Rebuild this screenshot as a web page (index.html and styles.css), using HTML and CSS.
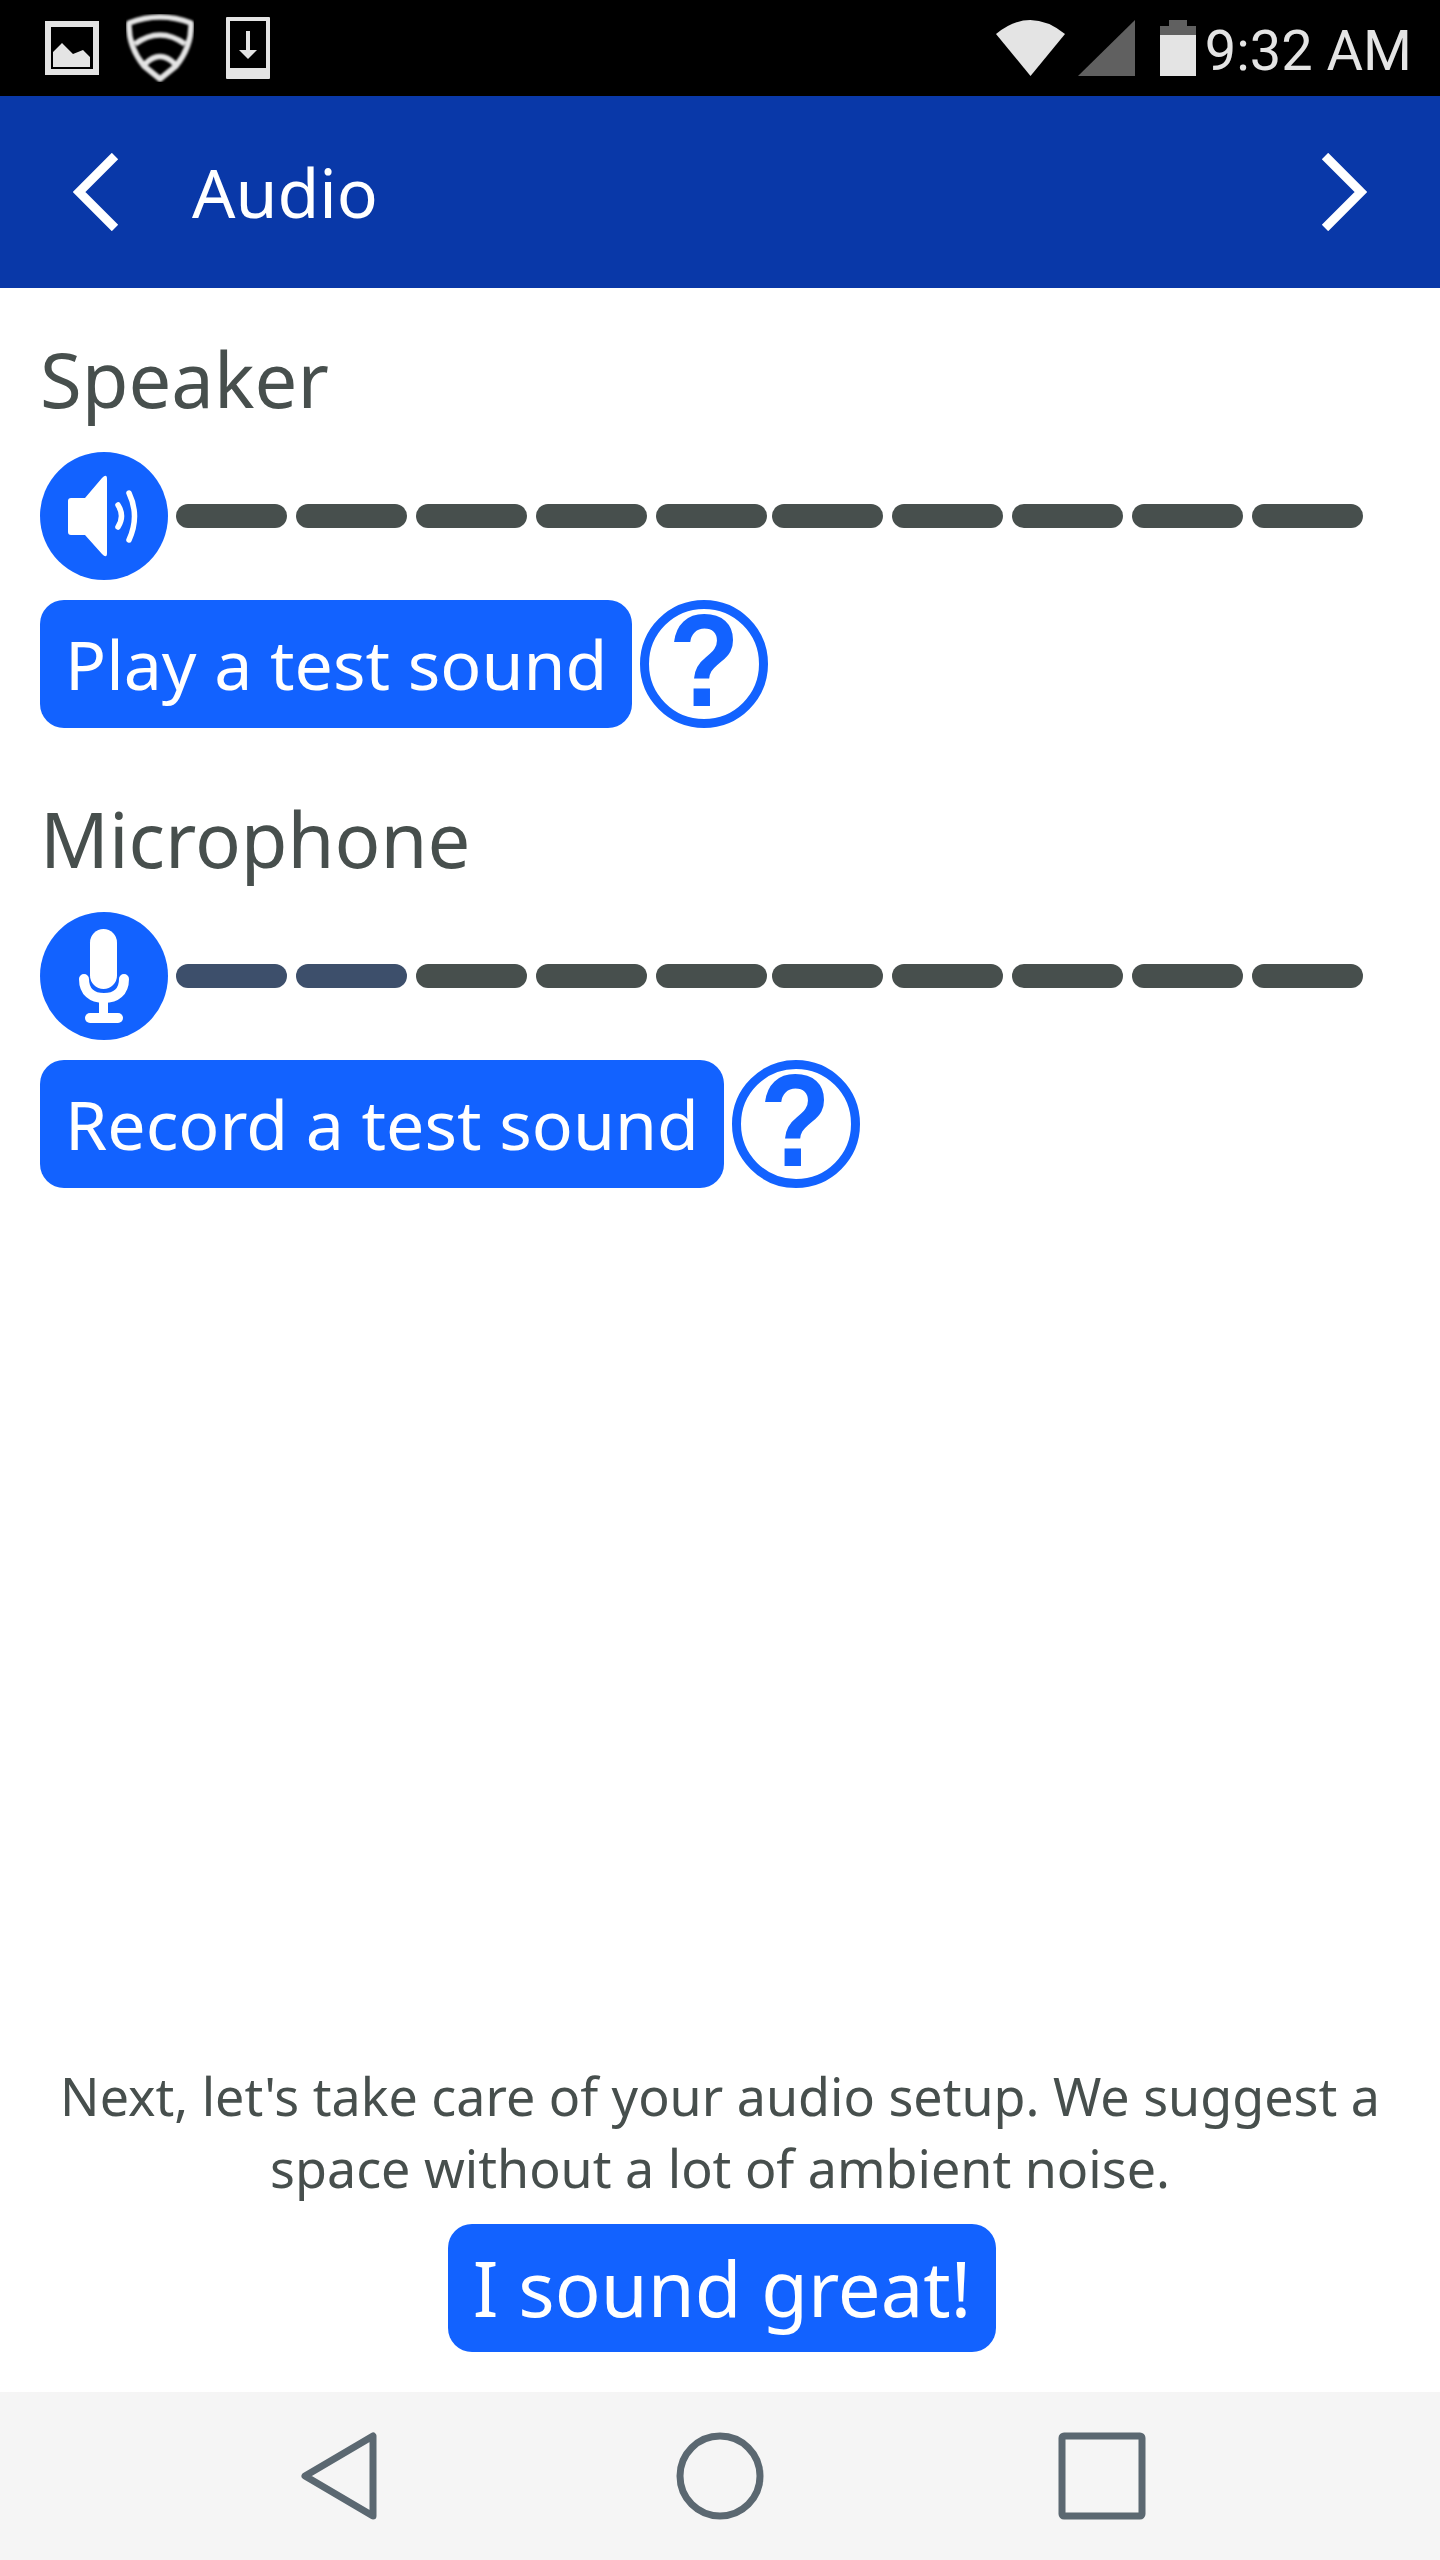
FILE: index.html
```html
<!DOCTYPE html>
<html lang="en">
<head>
<meta charset="utf-8">
<title>Audio</title>
<link rel="stylesheet" href="styles.css">
</head>
<body>
<div class="screen">
  <div class="status">
    <div class="status-left">
      <svg class="ic-image" viewBox="0 0 54 54"><path class="st-fill" fill-rule="evenodd" d="M0 0H54V54H0ZM6 6V48H48V6Z"/><path class="st-fill" d="M8 46V31L17 22L28 33L38 29L45 36V46Z"/></svg>
      <svg class="ic-shield" viewBox="0 0 68 68"><g class="st-line"><path d="M3 9Q34 -3 65 9Q66 32 50 52L34 65L18 52Q2 32 3 9Z"/><path d="M9 30Q34 12 59 30"/><path d="M19 50Q34 35 49 50"/></g></svg>
      <svg class="ic-phone" viewBox="0 0 44 62"><path class="st-fill" fill-rule="evenodd" d="M1 0H43Q44 0 44 1V61Q44 62 43 62H1Q0 62 0 61V1Q0 0 1 0ZM4 4V51H40V4Z"/><path class="st-arrow" d="M22 14V35"/><path class="st-fill" d="M13 33H31L22 42Z"/></svg>
    </div>
    <div class="status-right">
      <svg class="ic-wifi" viewBox="0 0 69 56"><path class="st-fill" d="M0 14Q34 -14 69 14L34.500 56Z"/></svg>
      <svg class="ic-signal" viewBox="0 0 57 56"><path class="st-dim" d="M57 0V56H0Z"/></svg>
      <svg class="ic-battery" viewBox="0 0 36 56"><path class="st-dim" d="M9 0H27V6H36V15H0V6H9Z"/><rect class="st-fill" y="15" width="36" height="41"/></svg>
      <span class="clock">9:32 AM</span>
    </div>
  </div>

  <header class="appbar">
    <svg class="chevron" viewBox="0 0 46 78"><path d="M42 3L6 39L42 75"/></svg>
    <h1 class="appbar-title">Audio</h1>
    <svg class="chevron chevron-next" viewBox="0 0 46 78"><path d="M4 3L40 39L4 75"/></svg>
  </header>

  <main class="content">
    <section class="device">
      <h2 class="device-name">Speaker</h2>
      <div class="meter">
        <svg class="round-icon" viewBox="0 0 128 128"><circle class="ri-bg" cx="64" cy="64" r="64"/><path class="ri-fill" d="M31 46H45L62 26Q67 21 67 27V101Q67 107 62 102L45 83H31Q28 83 28 80V49Q28 46 31 46Z"/><path class="ri-stroke" d="M78 53Q85 64 78 75"/><path class="ri-stroke" d="M89 41Q100 64 89 88"/></svg>
        <div class="levels">
          <div class="level-group"><span class="level"></span><span class="level"></span><span class="level"></span><span class="level"></span><span class="level"></span></div>
          <div class="level-group"><span class="level"></span><span class="level"></span><span class="level"></span><span class="level"></span><span class="level"></span></div>
        </div>
      </div>
      <div class="actions">
        <button class="btn">Play a test sound</button>
        <span class="help"><span class="help-mark">?</span></span>
      </div>
    </section>

    <section class="device">
      <h2 class="device-name">Microphone</h2>
      <div class="meter">
        <svg class="round-icon" viewBox="0 0 128 128"><circle class="ri-bg" cx="64" cy="64" r="64"/><rect class="ri-fill" x="50" y="17" width="27" height="60" rx="13.500"/><path class="ri-u" d="M44 67C44 80 52 86 64 86C76 86 84 80 84 67"/><rect class="ri-fill" x="59" y="88" width="9" height="16"/><rect class="ri-fill" x="45" y="101" width="38" height="10" rx="5"/></svg>
        <div class="levels">
          <div class="level-group"><span class="level level-on"></span><span class="level level-on"></span><span class="level"></span><span class="level"></span><span class="level"></span></div>
          <div class="level-group"><span class="level"></span><span class="level"></span><span class="level"></span><span class="level"></span><span class="level"></span></div>
        </div>
      </div>
      <div class="actions">
        <button class="btn">Record a test sound</button>
        <span class="help"><span class="help-mark">?</span></span>
      </div>
    </section>

    <div class="footer">
      <p class="hint">Next, let's take care of your audio setup. We suggest a space without a lot of ambient noise.</p>
      <button class="btn btn-large">I sound great!</button>
    </div>
  </main>

  <nav class="navbar">
    <svg class="nav-icon nav-back" viewBox="0 0 76 88"><path d="M72 4V84L4 44Z"/></svg>
    <svg class="nav-icon nav-home" viewBox="0 0 88 88"><circle cx="44" cy="44" r="40"/></svg>
    <svg class="nav-icon nav-recent" viewBox="0 0 88 88"><rect x="4" y="4" width="80" height="80" rx="2"/></svg>
  </nav>
</div>
</body>
</html>
```
FILE: styles.css
```css
* { box-sizing: border-box; }
html, body { margin: 0; padding: 0; background: #fff; }
.screen {
  width: 1440px;
  height: 2560px;
  display: flex;
  flex-direction: column;
  font-family: "Noto Sans", sans-serif;
  color: #474f4d;
}

/* status bar */
.status {
  height: 96px;
  background: #000;
  display: flex;
  justify-content: space-between;
  align-items: flex-start;
  padding: 0 28px 0 45px;
}
.status-left, .status-right { display: flex; align-items: flex-start; }
.st-fill { fill: #e4e4e4; }
.st-dim { fill: #606060; }
.st-line { fill: none; stroke: #e4e4e4; stroke-width: 5.500; stroke-linejoin: round; filter: blur(0.9px); }
.st-arrow { fill: none; stroke: #e4e4e4; stroke-width: 4; }
.ic-image { width: 54px; height: 54px; margin-top: 21px; }
.ic-shield { width: 68px; height: 68px; margin: 14px 0 0 27px; }
.ic-phone { width: 44px; height: 62px; margin: 17px 0 0 32px; }
.ic-wifi { width: 69px; height: 56px; margin-top: 20px; }
.ic-signal { width: 57px; height: 56px; margin: 20px 0 0 13px; }
.ic-battery { width: 36px; height: 56px; margin: 20px 0 0 25px; }
.clock {
  font-family: Roboto, sans-serif;
  font-weight: 400;
  font-size: 56px;
  line-height: 96px;
  color: #e4e4e4;
  margin: 3px 0 0 9px;
  white-space: nowrap;
}

/* app bar */
.appbar {
  height: 192px;
  background: #0938a8;
  display: flex;
  align-items: center;
  padding: 0 73px;
  color: #fff;
}
.chevron { width: 46px; height: 78px; fill: none; stroke: #fff; stroke-width: 9; flex: none; }
.appbar-title {
  margin: 0 0 0 73px;
  font-size: 68px;
  font-weight: 400;
  line-height: 96px;
  flex: 1;
}

/* content */
.content {
  flex: 1;
  display: flex;
  flex-direction: column;
  padding: 41px 40px 40px;
}
.device + .device { margin-top: 61px; }
.device-name {
  margin: 0 0 23px;
  font-size: 76px;
  font-weight: 400;
  line-height: 100px;
}
.meter { display: flex; align-items: center; }
.round-icon { width: 128px; height: 128px; flex: none; }
.ri-bg { fill: #1262ff; }
.ri-fill { fill: #fff; }
.ri-stroke { fill: none; stroke: #fff; stroke-width: 5.500; stroke-linecap: round; }
.ri-u { fill: none; stroke: #fff; stroke-width: 10; stroke-linecap: round; }
.levels { display: flex; gap: 5px; margin-left: 8px; }
.level-group { display: flex; gap: 9px; }
.level { width: 111px; height: 24px; border-radius: 12px; background: #474f4d; }
.level-on { background: #3d4f6b; }
.actions { display: flex; align-items: center; gap: 8px; margin-top: 20px; }
.btn {
  height: 128px;
  padding: 0 25px;
  border: 0;
  border-radius: 24px;
  background: #1262ff;
  color: #fff;
  font-family: inherit;
  font-size: 68px;
  line-height: 128px;
  white-space: nowrap;
}
.help {
  width: 128px;
  height: 128px;
  border: 9px solid #1262ff;
  border-radius: 50%;
  color: #1262ff;
  font-family: "Liberation Sans", sans-serif;
  font-weight: 700;
  font-size: 132px;
  line-height: 104px;
  text-align: center;
  flex: none;
}
.help-mark { display: inline-block; transform: scaleX(0.88); }
.footer {
  margin-top: auto;
  display: flex;
  flex-direction: column;
  align-items: center;
}
.hint {
  margin: 0;
  font-size: 52px;
  line-height: 72px;
  text-align: center;
  width: 1340px;
}
.btn-large { margin: 20px 0 0 4px; font-size: 76px; }

/* nav */
.navbar {
  height: 168px;
  background: #f5f5f5;
  display: flex;
  align-items: flex-start;
  padding: 40px 0 0 301px;
}
.nav-icon { height: 88px; fill: none; stroke: #5b6871; stroke-width: 7; stroke-linejoin: round; flex: none; }
.nav-back { width: 76px; }
.nav-home { width: 88px; margin-left: 299px; }
.nav-recent { width: 88px; margin-left: 294px; }
```
